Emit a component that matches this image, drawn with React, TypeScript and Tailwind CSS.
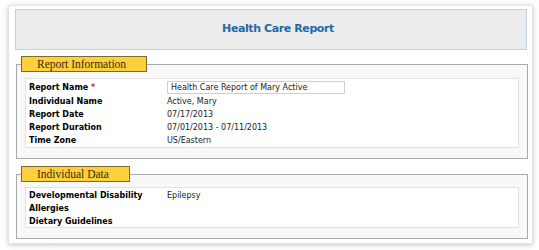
import React from "react";

const Row = ({ label, value }: { label: string; value?: string }) => (
  <div className="flex h-[13px] items-center">
    <div className="w-[138px] font-bold text-black">{label}</div>
    <div className="text-[#222]">{value}</div>
  </div>
);

const Legend = ({ children }: { children: React.ReactNode }) => (
  <legend className="ml-[4px] h-[16px] border border-[#7d6a2c] bg-[#fbd03c] pl-[15px] pr-[20px] text-[11.5px] leading-[14px] text-[#3b2a0c] [font-family:'Liberation_Serif',serif]">
    {children}
  </legend>
);

export default function App() {
  return (
    <div className="h-[250px] w-[539px] bg-white pl-[8px] pt-[5px] [font-family:'DejaVu_Sans',Verdana,sans-serif] text-[8px]">
      <div className="flex h-[239px] w-[525px] flex-col border border-[#e4e4e4] bg-white pl-[6px] pt-[3px] shadow-[0_1px_5px_rgba(0,0,0,0.22)]">
        <div className="flex h-[41px] w-[512px] shrink-0 items-center justify-center border border-[#c3d1dc] bg-[#ececec] pl-[14px]">
          <span className="text-[11px] font-bold tracking-[-0.4px] text-[#1f6aa6]">Health Care Report</span>
        </div>

        <fieldset className="ml-[1px] mt-[6px] h-[103px] w-[512px] shrink-0 border border-[#a9a9a9] bg-[#f8f8f8] px-0">
          <Legend>Report Information</Legend>
          <div className="mx-[8px] mt-[6px] h-[70px] border border-[#e2e2e2] bg-white pl-[3px] pt-[2px]">
            <div className="flex h-[13px] items-center">
              <div className="w-[138px] font-bold text-black">
                Report Name <span className="text-[#d42a2a]">*</span>
              </div>
              <div className="flex h-[13px] w-[178px] items-center border border-[#cfcfcf] bg-white pl-[3px] text-[#222]">
                Health Care Report of Mary Active
              </div>
            </div>
            <div className="h-[1px]" />
            <Row label="Individual Name" value="Active, Mary" />
            <Row label="Report Date" value="07/17/2013" />
            <Row label="Report Duration" value="07/01/2013 - 07/11/2013" />
            <Row label="Time Zone" value="US/Eastern" />
          </div>
        </fieldset>

        <fieldset className="ml-[1px] mt-[7px] h-[73px] w-[512px] shrink-0 border border-[#a9a9a9] bg-[#f8f8f8] px-0">
          <Legend>Individual Data</Legend>
          <div className="mx-[8px] mt-[5px] h-[41px] border border-[#e2e2e2] bg-white pl-[3px] pt-[1px]">
            <Row label="Developmental Disability" value="Epilepsy" />
            <Row label="Allergies" />
            <Row label="Dietary Guidelines" />
          </div>
        </fieldset>
      </div>
    </div>
  );
}
